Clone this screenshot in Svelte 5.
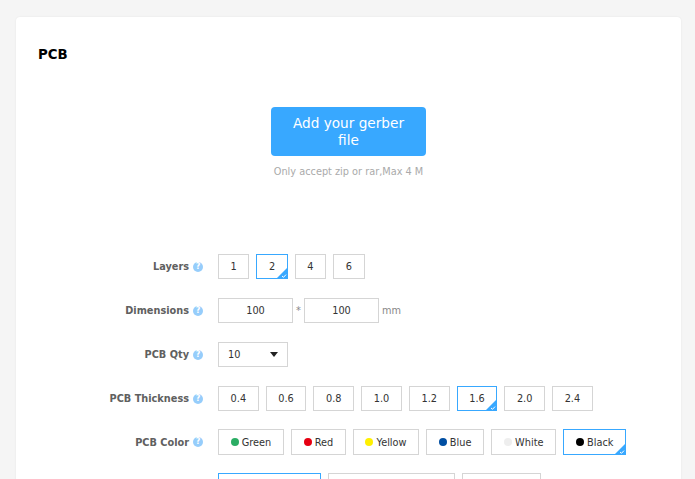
<script>
	const layers = ["1", "2", "4", "6"];
	const thickness = ["0.4", "0.6", "0.8", "1.0", "1.2", "1.6", "2.0", "2.4"];
	const colors = [
		{ name: "Green", dot: "#2bad64", w: 66 },
		{ name: "Red", dot: "#e60012", w: 55 },
		{ name: "Yellow", dot: "#fff000", w: 66 },
		{ name: "Blue", dot: "#004ea2", w: 58.3 },
		{ name: "White", dot: "#eeeeee", w: 65 },
		{ name: "Black", dot: "#000000", w: 63 }
	];
	const finishes = [
		{ name: "HASL lead", w: 103 },
		{ name: "HASL lead free", w: 127 },
		{ name: "ENIG", w: 79 }
	];

	let layer = $state("2");
	let thick = $state("1.6");
	let color = $state("Black");
	let finish = $state("HASL lead");
</script>

{#snippet mark()}
	<span class="mark">
		<svg viewBox="0 0 12 12" width="12" height="12">
			<path d="M12 0V12H0Z" fill="#38a8ff" />
			<path d="M6 9l1.5 1.3L10 7.6" fill="none" stroke="#fff" stroke-width="1" />
		</svg>
	</span>
{/snippet}

{#snippet label(text)}
	<div class="label">
		{text}
		<span class="help">?</span>
	</div>
{/snippet}

<div class="card">
	<h2>PCB</h2>

	<div class="upload">
		<button class="add">Add your gerber file</button>
		<p>Only accept zip or rar,Max 4 M</p>
	</div>

	<div class="row">
		{@render label("Layers")}
		<div class="opts">
			{#each layers as l}
				<button class="opt layer" class:on={layer === l} onclick={() => (layer = l)}>
					{l}
					{#if layer === l}{@render mark()}{/if}
				</button>
			{/each}
		</div>
	</div>

	<div class="row">
		{@render label("Dimensions")}
		<div class="dims">
			<input value="100" />
			<span class="times">*</span>
			<input value="100" />
			<span class="unit">mm</span>
		</div>
	</div>

	<div class="row">
		{@render label("PCB Qty")}
		<div class="select">
			10
			<span class="caret"></span>
		</div>
	</div>

	<div class="row tight">
		{@render label("PCB Thickness")}
		<div class="opts">
			{#each thickness as t}
				<button class="opt thick" class:on={thick === t} onclick={() => (thick = t)}>
					{t}
					{#if thick === t}{@render mark()}{/if}
				</button>
			{/each}
		</div>
	</div>

	<div class="row tight">
		{@render label("PCB Color")}
		<div class="opts">
			{#each colors as c}
				<button
					class="opt color"
					class:on={color === c.name}
					style="width: {c.w}px"
					onclick={() => (color = c.name)}
				>
					<span class="dot" style="background: {c.dot}"></span>
					{c.name}
					{#if color === c.name}{@render mark()}{/if}
				</button>
			{/each}
		</div>
	</div>

	<div class="row">
		{@render label("Surface Finish")}
		<div class="opts">
			{#each finishes as f}
				<button
					class="opt finish"
					class:on={finish === f.name}
					style="width: {f.w}px"
					onclick={() => (finish = f.name)}
				>
					{f.name}
					{#if finish === f.name}{@render mark()}{/if}
				</button>
			{/each}
		</div>
	</div>
</div>

<style>
	:global(body) {
		margin: 0;
		height: 479px;
		overflow: hidden;
		background: #f5f5f5;
		font-family: "DejaVu Sans", sans-serif;
		font-size: 9.75px;
		color: #333;
	}
	.card {
		margin: 17px 14px 0 16px;
		padding: 30px 22px 40px;
		background: #fff;
		border-radius: 4px;
		box-shadow: 0 0 2px rgba(0, 0, 0, 0.08);
	}
	h2 {
		margin: 0;
		font-size: 13.3px;
		line-height: 15px;
		font-weight: 700;
		color: #000;
	}
	.upload {
		display: flex;
		flex-direction: column;
		align-items: center;
		margin-top: 45px;
		margin-bottom: 76px;
	}
	.add {
		width: 155px;
		height: 49px;
		padding: 0 16px;
		border: 0;
		border-radius: 4px;
		background: #38a8ff;
		color: #fff;
		font: 13.65px/17px "DejaVu Sans", sans-serif;
	}
	.upload p {
		margin: 9px 0 0;
		font-size: 9.75px;
		line-height: 13px;
		color: #aaa;
	}
	.row {
		display: flex;
		align-items: center;
		margin-bottom: 19px;
	}
	.row.tight {
		margin-bottom: 18px;
	}
	.label {
		display: flex;
		justify-content: flex-end;
		align-items: center;
		gap: 4px;
		width: 165px;
		margin-right: 15px;
		font-weight: 700;
		color: #606060;
		white-space: nowrap;
	}
	.help {
		width: 10px;
		height: 10px;
		border-radius: 50%;
		background: #96cdfb;
		color: #fff;
		font-size: 8px;
		line-height: 10px;
		text-align: center;
	}
	.opts {
		display: flex;
		gap: 7px;
	}
	.opt {
		position: relative;
		box-sizing: border-box;
		height: 25px;
		padding: 0;
		border: 1px solid #d5d5d5;
		background: #fff;
		color: #333;
		font: 9.75px "DejaVu Sans", sans-serif;
		white-space: nowrap;
	}
	.opt.on {
		border-color: #38a8ff;
	}
	.layer {
		width: 31.4px;
	}
	.thick {
		width: 40.72px;
	}
	.color {
		display: flex;
		align-items: center;
		justify-content: center;
		gap: 3px;
		height: 26px;
	}
	.finish {
		height: 26px;
	}
	.dot {
		width: 8px;
		height: 8px;
		border-radius: 50%;
	}
	.mark {
		position: absolute;
		right: -1px;
		bottom: -1px;
		width: 12px;
		height: 12px;
		line-height: 0;
	}
	.dims {
		display: flex;
		align-items: center;
	}
	.dims input {
		box-sizing: border-box;
		width: 75px;
		height: 25px;
		padding: 0;
		border: 1px solid #d5d5d5;
		border-radius: 0;
		outline: 0;
		color: #333;
		text-align: center;
		font: 9.75px "DejaVu Sans", sans-serif;
	}
	.times {
		width: 11px;
		text-align: center;
		color: #888;
	}
	.unit {
		margin-left: 3px;
		color: #888;
	}
	.select {
		display: flex;
		align-items: center;
		justify-content: space-between;
		box-sizing: border-box;
		width: 70px;
		height: 25px;
		padding: 0 9px;
		border: 1px solid #d5d5d5;
	}
	.caret {
		width: 0;
		height: 0;
		border-left: 4.5px solid transparent;
		border-right: 4.5px solid transparent;
		border-top: 5px solid #222;
	}
</style>
